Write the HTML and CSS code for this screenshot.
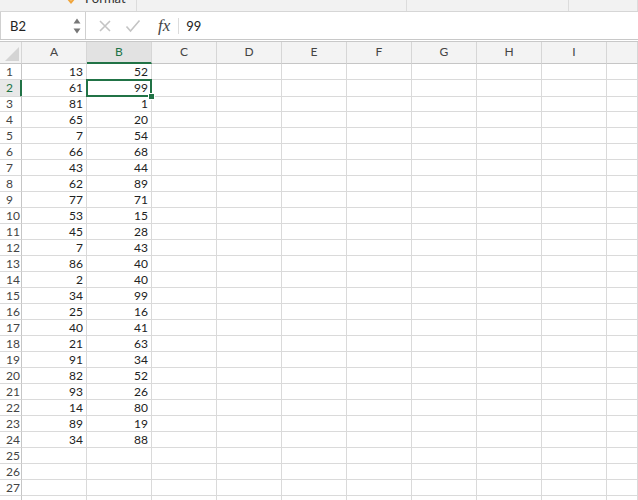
FILE: index.html
```html
<!DOCTYPE html>
<html lang="en">
<head>
    <meta charset="UTF-8">
    <title>Book1 - Sheet1</title>
    <link rel="stylesheet" href="styles.css">
</head>
<body>
    <!-- bottom edge of the ribbon, scrolled mostly out of view -->
    <div class="ribbon">
        <div class="group group-cells">
            <svg class="format-icon" width="12" height="10" viewBox="0 0 12 10">
                <path d="M1 0 L6 6 L11 0 Z" fill="#f0a53c"/>
                <path d="M4 0 L6 3 L8 0 Z" fill="#fbd9a6"/>
            </svg>
            <span class="format-label">Format</span>
        </div>
        <div class="group group-editing"></div>
        <div class="group group-ideas"></div>
        <div class="group"></div>
    </div>

    <div class="formula-bar">
        <div class="name-box">
            <span class="cell-ref">B2</span>
            <span class="spin">
                <svg width="8" height="18" viewBox="0 0 8 18">
                    <path d="M0.5 6.5 L4 1.5 L7.5 6.5 Z" fill="#777"/>
                    <path d="M0.5 11.5 L4 16.5 L7.5 11.5 Z" fill="#777"/>
                </svg>
            </span>
        </div>
        <div class="bar-buttons">
            <svg class="btn" width="14" height="14" viewBox="0 0 14 14">
                <path d="M2 2 L12 12 M12 2 L2 12" stroke="#c4c4c4" stroke-width="1.6" fill="none"/>
            </svg>
            <svg class="btn" width="16" height="14" viewBox="0 0 16 14">
                <path d="M1.5 7.5 L5.5 12 L14.5 1.5" stroke="#c4c4c4" stroke-width="1.6" fill="none"/>
            </svg>
            <span class="fx">fx</span>
        </div>
        <div class="formula">99</div>
    </div>

    <div class="sheet">
        <div class="row head">
            <span class="corner"></span>
            <span>A</span><span class="active">B</span><span>C</span><span>D</span><span>E</span>
            <span>F</span><span>G</span><span>H</span><span>I</span><span></span>
        </div>
        <div class="row"><span class="rh">1</span><span class="n">13</span><span class="n">52</span><i></i><i></i><i></i><i></i><i></i><i></i><i></i><i></i></div>
        <div class="row"><span class="rh active">2</span><span class="n">61</span><span class="n selected">99<b class="handle"></b></span><i></i><i></i><i></i><i></i><i></i><i></i><i></i><i></i></div>
        <div class="row"><span class="rh">3</span><span class="n">81</span><span class="n">1</span><i></i><i></i><i></i><i></i><i></i><i></i><i></i><i></i></div>
        <div class="row"><span class="rh">4</span><span class="n">65</span><span class="n">20</span><i></i><i></i><i></i><i></i><i></i><i></i><i></i><i></i></div>
        <div class="row"><span class="rh">5</span><span class="n">7</span><span class="n">54</span><i></i><i></i><i></i><i></i><i></i><i></i><i></i><i></i></div>
        <div class="row"><span class="rh">6</span><span class="n">66</span><span class="n">68</span><i></i><i></i><i></i><i></i><i></i><i></i><i></i><i></i></div>
        <div class="row"><span class="rh">7</span><span class="n">43</span><span class="n">44</span><i></i><i></i><i></i><i></i><i></i><i></i><i></i><i></i></div>
        <div class="row"><span class="rh">8</span><span class="n">62</span><span class="n">89</span><i></i><i></i><i></i><i></i><i></i><i></i><i></i><i></i></div>
        <div class="row"><span class="rh">9</span><span class="n">77</span><span class="n">71</span><i></i><i></i><i></i><i></i><i></i><i></i><i></i><i></i></div>
        <div class="row"><span class="rh">10</span><span class="n">53</span><span class="n">15</span><i></i><i></i><i></i><i></i><i></i><i></i><i></i><i></i></div>
        <div class="row"><span class="rh">11</span><span class="n">45</span><span class="n">28</span><i></i><i></i><i></i><i></i><i></i><i></i><i></i><i></i></div>
        <div class="row"><span class="rh">12</span><span class="n">7</span><span class="n">43</span><i></i><i></i><i></i><i></i><i></i><i></i><i></i><i></i></div>
        <div class="row"><span class="rh">13</span><span class="n">86</span><span class="n">40</span><i></i><i></i><i></i><i></i><i></i><i></i><i></i><i></i></div>
        <div class="row"><span class="rh">14</span><span class="n">2</span><span class="n">40</span><i></i><i></i><i></i><i></i><i></i><i></i><i></i><i></i></div>
        <div class="row"><span class="rh">15</span><span class="n">34</span><span class="n">99</span><i></i><i></i><i></i><i></i><i></i><i></i><i></i><i></i></div>
        <div class="row"><span class="rh">16</span><span class="n">25</span><span class="n">16</span><i></i><i></i><i></i><i></i><i></i><i></i><i></i><i></i></div>
        <div class="row"><span class="rh">17</span><span class="n">40</span><span class="n">41</span><i></i><i></i><i></i><i></i><i></i><i></i><i></i><i></i></div>
        <div class="row"><span class="rh">18</span><span class="n">21</span><span class="n">63</span><i></i><i></i><i></i><i></i><i></i><i></i><i></i><i></i></div>
        <div class="row"><span class="rh">19</span><span class="n">91</span><span class="n">34</span><i></i><i></i><i></i><i></i><i></i><i></i><i></i><i></i></div>
        <div class="row"><span class="rh">20</span><span class="n">82</span><span class="n">52</span><i></i><i></i><i></i><i></i><i></i><i></i><i></i><i></i></div>
        <div class="row"><span class="rh">21</span><span class="n">93</span><span class="n">26</span><i></i><i></i><i></i><i></i><i></i><i></i><i></i><i></i></div>
        <div class="row"><span class="rh">22</span><span class="n">14</span><span class="n">80</span><i></i><i></i><i></i><i></i><i></i><i></i><i></i><i></i></div>
        <div class="row"><span class="rh">23</span><span class="n">89</span><span class="n">19</span><i></i><i></i><i></i><i></i><i></i><i></i><i></i><i></i></div>
        <div class="row"><span class="rh">24</span><span class="n">34</span><span class="n">88</span><i></i><i></i><i></i><i></i><i></i><i></i><i></i><i></i></div>
        <div class="row"><span class="rh">25</span><i></i><i></i><i></i><i></i><i></i><i></i><i></i><i></i><i></i><i></i></div>
        <div class="row"><span class="rh">26</span><i></i><i></i><i></i><i></i><i></i><i></i><i></i><i></i><i></i><i></i></div>
        <div class="row"><span class="rh">27</span><i></i><i></i><i></i><i></i><i></i><i></i><i></i><i></i><i></i><i></i></div>
        <div class="row"><span class="rh"></span><i></i><i></i><i></i><i></i><i></i><i></i><i></i><i></i><i></i><i></i></div>
    </div>
</body>
</html>
```

FILE: styles.css
```css
body {
    margin: 0;
    font-family: Lato, "Liberation Sans", sans-serif;
    background-color: #fff;
    color: #222;
    width: 638px;
    height: 500px;
    overflow: hidden;
}

/* ribbon strip */
.ribbon {
    display: flex;
    height: 11px;
    background-color: #f2f2f2;
    border-bottom: 1px solid #d6d6d6;
    overflow: hidden;
}

.group {
    flex: 1;
    border-right: 1px solid #dcdcdc;
}

.group-cells {
    flex: 0 0 137px;
    display: flex;
    align-items: flex-start;
    padding-left: 65px;
    box-sizing: border-box;
}

.group-editing {
    flex: 0 0 270px;
    box-sizing: border-box;
}

.group-ideas {
    flex: 0 0 162px;
    box-sizing: border-box;
}

.format-icon {
    margin-top: -2px;
}

.format-label {
    font-size: 13px;
    color: #333;
    margin-left: 8px;
    margin-top: -10px;
}

/* formula bar */
.formula-bar {
    display: flex;
    height: 27px;
    border-bottom: 1px solid #c8c8c8;
    background-color: #fff;
}

.name-box {
    width: 86px;
    display: flex;
    align-items: center;
    justify-content: space-between;
    border-right: 1px solid #d0d0d0;
    border-left: 1px solid #d0d0d0;
    box-sizing: border-box;
    padding: 0 4px 0 9px;
}

.cell-ref {
    font-size: 13px;
    color: #222;
}

.spin svg {
    display: block;
}

.bar-buttons {
    display: flex;
    align-items: center;
    padding-left: 12px;
    gap: 13px;
}

.btn {
    display: block;
}

.fx {
    font-family: "Liberation Serif", serif;
    font-style: italic;
    font-size: 17px;
    color: #444;
    margin-left: 4px;
    padding-right: 8px;
    border-right: 1px solid #dcdcdc;
    line-height: 16px;
}

.formula {
    display: flex;
    align-items: center;
    padding-left: 7px;
    font-size: 13px;
}

/* grid */
.sheet {
    border-top: 1px solid #c8c8c8;
    margin-top: 1px;
}

.row {
    display: grid;
    grid-template-columns: 22px repeat(9, 65px) 1fr;
    height: 16px;
}

.row > * {
    box-sizing: border-box;
    border-right: 1px solid #dadada;
    border-bottom: 1px solid #dadada;
    font-style: normal;
    font-size: 12px;
    line-height: 16px;
    overflow: hidden;
}

.n {
    text-align: right;
    padding-right: 3px;
}

.rh {
    color: #444;
    padding-left: 6px;
    border-right-color: #c6c6c6 !important;
}

.rh.active {
    color: #217346;
    background-color: #e8e8e8;
    border-right: 2px solid #217346 !important;
}

.head {
    height: 22px;
    background-color: #f3f3f3;
}

.head > span {
    text-align: center;
    color: #444;
    line-height: 20px;
    border-bottom-color: #c6c6c6;
    border-right-color: #d6d6d6;
}

.head > .active {
    color: #217346;
    background-color: #e2e2e2;
    border-bottom: 2px solid #217346;
}

.corner {
    position: relative;
}

.corner::after {
    content: "";
    position: absolute;
    right: 2px;
    bottom: 2px;
    border-style: solid;
    border-width: 0 0 14px 14px;
    border-color: transparent transparent #d4d4d4 transparent;
}

/* active cell outline and fill handle */
.selected {
    position: relative;
    overflow: visible !important;
}

.selected::before {
    content: "";
    position: absolute;
    left: -1px;
    top: -1px;
    right: -1px;
    bottom: -1px;
    border: 2px solid #217346;
}

.handle {
    position: absolute;
    right: -4px;
    bottom: -4px;
    width: 5px;
    height: 5px;
    background-color: #217346;
    border: 1px solid #fff;
    z-index: 2;
}
```
